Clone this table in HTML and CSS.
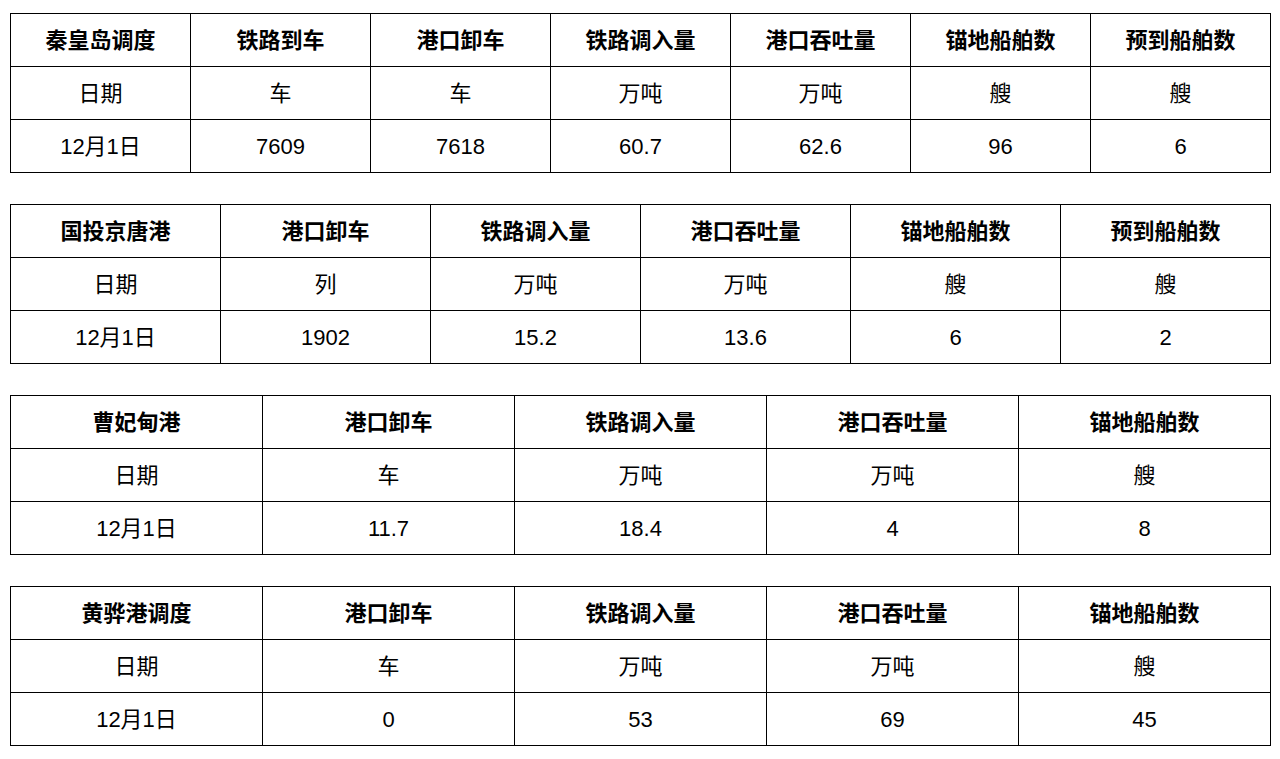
FILE: index.html
```html
<!DOCTYPE html>
<html lang="zh-CN">
<head>
<meta charset="utf-8">
<title>港口调度</title>
<link rel="stylesheet" href="styles.css">
</head>
<body>
<div class="page">
  <table class="grid">
    <tr class="head"><td>秦皇岛调度</td><td>铁路到车</td><td>港口卸车</td><td>铁路调入量</td><td>港口吞吐量</td><td>锚地船舶数</td><td>预到船舶数</td></tr>
    <tr><td>日期</td><td>车</td><td>车</td><td>万吨</td><td>万吨</td><td>艘</td><td>艘</td></tr>
    <tr><td>12月1日</td><td>7609</td><td>7618</td><td>60.7</td><td>62.6</td><td>96</td><td>6</td></tr>
  </table>
  <table class="grid">
    <tr class="head"><td>国投京唐港</td><td>港口卸车</td><td>铁路调入量</td><td>港口吞吐量</td><td>锚地船舶数</td><td>预到船舶数</td></tr>
    <tr><td>日期</td><td>列</td><td>万吨</td><td>万吨</td><td>艘</td><td>艘</td></tr>
    <tr><td>12月1日</td><td>1902</td><td>15.2</td><td>13.6</td><td>6</td><td>2</td></tr>
  </table>
  <table class="grid">
    <tr class="head"><td>曹妃甸港</td><td>港口卸车</td><td>铁路调入量</td><td>港口吞吐量</td><td>锚地船舶数</td></tr>
    <tr><td>日期</td><td>车</td><td>万吨</td><td>万吨</td><td>艘</td></tr>
    <tr><td>12月1日</td><td>11.7</td><td>18.4</td><td>4</td><td>8</td></tr>
  </table>
  <table class="grid">
    <tr class="head"><td>黄骅港调度</td><td>港口卸车</td><td>铁路调入量</td><td>港口吞吐量</td><td>锚地船舶数</td></tr>
    <tr><td>日期</td><td>车</td><td>万吨</td><td>万吨</td><td>艘</td></tr>
    <tr><td>12月1日</td><td>0</td><td>53</td><td>69</td><td>45</td></tr>
  </table>
</div>
</body>
</html>
```
FILE: styles.css
```css
html, body {
  margin: 0;
  padding: 0;
  background: #ffffff;
}
.page {
  display: flex;
  flex-direction: column;
  gap: 31px;
  padding: 13px 0 0 10px;
}
.grid {
  width: 1261px;
  border-collapse: collapse;
  table-layout: fixed;
  font-family: "Liberation Sans", "Noto Sans CJK SC", sans-serif;
  font-size: 22px;
  color: #000000;
}
.grid td {
  border: 1px solid #000000;
  height: 50px;
  padding: 2px 0 0 0;
  text-align: center;
  vertical-align: middle;
  line-height: 26px;
}
.grid .head td {
  font-weight: bold;
}
```
